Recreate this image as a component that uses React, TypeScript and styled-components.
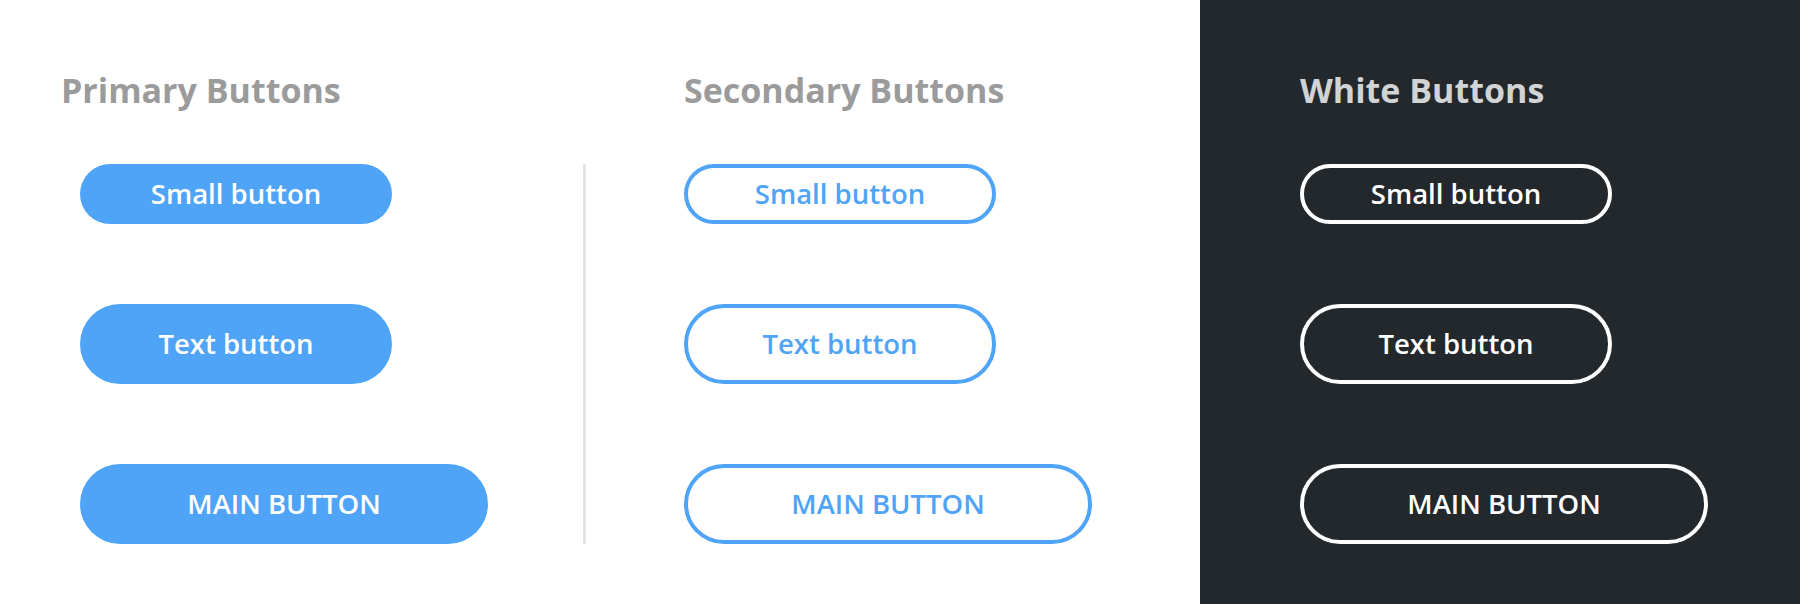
import React from "react";
import styled, { createGlobalStyle, css } from "styled-components";

const GlobalStyle = createGlobalStyle`
  html, body {
    margin: 0;
    padding: 0;
    background: #ffffff;
  }
  body {
    font-family: "Open Sans", "Lato", "Liberation Sans", sans-serif;
    -webkit-font-smoothing: antialiased;
  }
  * { box-sizing: border-box; }
`;

const BLUE = "#4fa4f7";

const Page = styled.div`
  display: flex;
  width: 1800px;
  height: 604px;
`;

const LightArea = styled.section`
  width: 1200px;
  background: #ffffff;
  display: grid;
  grid-template-columns: 522px 3px 1fr;
  grid-template-rows: auto auto;
  grid-template-areas:
    "h1 . h2"
    "s1 d s2";
  align-content: start;
  row-gap: 54px;
  padding: 70px 0 0 61px;
`;

const DarkArea = styled.section`
  flex: 1;
  background: #22282b;
  display: flex;
  flex-direction: column;
  row-gap: 54px;
  padding: 70px 0 0 100px;
`;

const Heading = styled.h2<{ $area?: string; $tone: "gray" | "light"; $indent?: number }>`
  grid-area: ${(p) => p.$area ?? "auto"};
  margin: 0;
  padding-left: ${(p) => p.$indent ?? 0}px;
  font-family: "Open Sans", "Lato", sans-serif;
  font-weight: 700;
  font-size: 34px;
  line-height: 40px;
  letter-spacing: 0;
  color: ${(p) => (p.$tone === "gray" ? "#9b9b9b" : "#d1d3d4")};
`;

const Stack = styled.div<{ $area?: string; $indent?: number }>`
  grid-area: ${(p) => p.$area ?? "auto"};
  display: flex;
  flex-direction: column;
  align-items: flex-start;
  row-gap: 80px;
  padding-left: ${(p) => p.$indent ?? 0}px;
`;

const Divider = styled.div`
  grid-area: d;
  width: 3px;
  background: #e4e4e4;
`;

type Variant = "primary" | "secondary" | "white";
type Size = "small" | "text" | "main";

const sizes: Record<Size, { w: number; h: number }> = {
  small: { w: 312, h: 60 },
  text: { w: 312, h: 80 },
  main: { w: 408, h: 80 },
};

const Button = styled.button<{ $variant: Variant; $size: Size }>`
  display: flex;
  align-items: center;
  justify-content: center;
  width: ${(p) => sizes[p.$size].w}px;
  height: ${(p) => sizes[p.$size].h}px;
  border-radius: ${(p) => sizes[p.$size].h / 2}px;
  padding: 0;
  font-family: "Open Sans", "Lato", sans-serif;
  font-weight: 600;
  font-size: 27.5px;
  line-height: 1;
  cursor: pointer;
  ${(p) =>
    p.$variant === "primary"
      ? css`
          background: ${BLUE};
          border: none;
          color: #ffffff;
        `
      : p.$variant === "secondary"
      ? css`
          background: transparent;
          border: 4px solid ${BLUE};
          color: ${BLUE};
        `
      : css`
          background: transparent;
          border: 4px solid #ffffff;
          color: #ffffff;
        `}
`;

const ButtonSet: React.FC<{ variant: Variant }> = ({ variant }) => (
  <>
    <Button $variant={variant} $size="small">Small button</Button>
    <Button $variant={variant} $size="text">Text button</Button>
    <Button $variant={variant} $size="main">MAIN BUTTON</Button>
  </>
);

export default function App() {
  return (
    <>
      <GlobalStyle />
      <Page>
        <LightArea>
          <Heading $area="h1" $tone="gray">Primary Buttons</Heading>
          <Heading $area="h2" $tone="gray" $indent={98}>Secondary Buttons</Heading>
          <Stack $area="s1" $indent={19}>
            <ButtonSet variant="primary" />
          </Stack>
          <Divider />
          <Stack $area="s2" $indent={98}>
            <ButtonSet variant="secondary" />
          </Stack>
        </LightArea>
        <DarkArea>
          <Heading $tone="light">White Buttons</Heading>
          <Stack>
            <ButtonSet variant="white" />
          </Stack>
        </DarkArea>
      </Page>
    </>
  );
}
